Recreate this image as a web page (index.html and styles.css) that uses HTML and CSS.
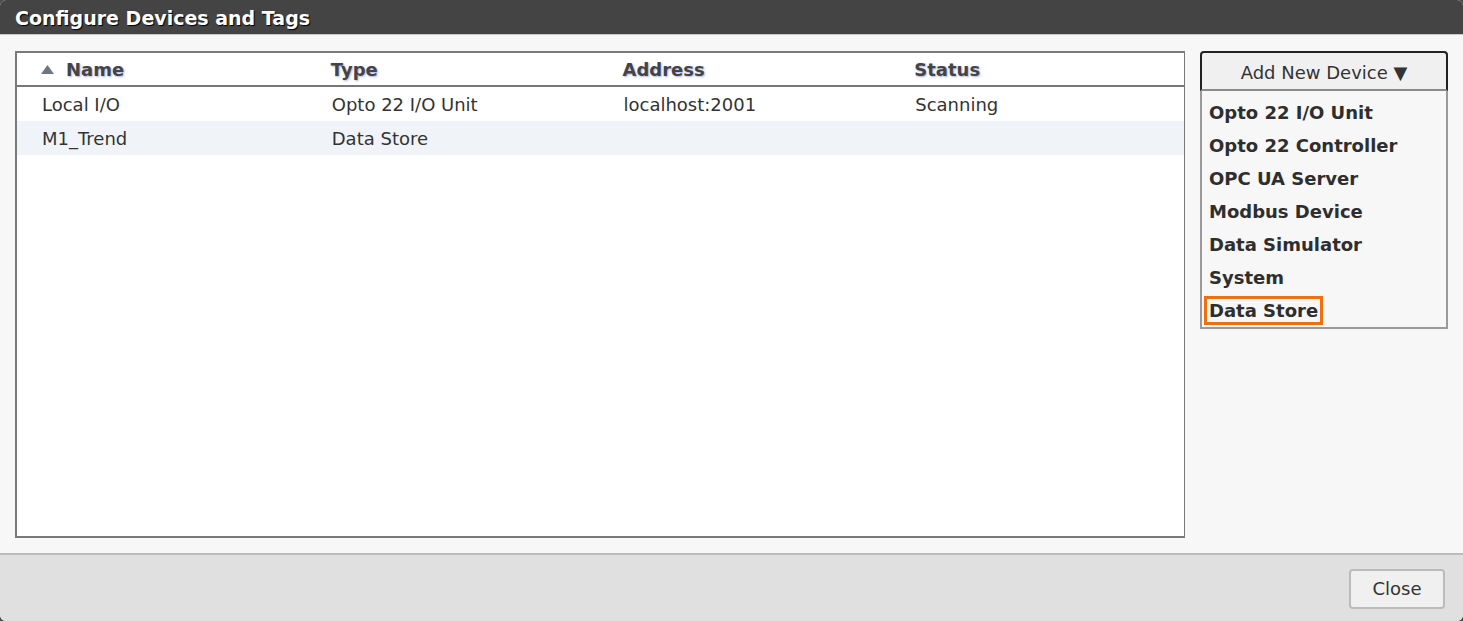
FILE: index.html
```html
<!DOCTYPE html>
<html>
<head>
<meta charset="utf-8">
<link rel="stylesheet" href="styles.css">
</head>
<body>
<div class="dialog">
  <div class="titlebar">Configure Devices and Tags</div>
  <div class="content">
    <div class="grid">
      <table class="devices">
        <thead>
          <tr>
            <th class="first"><svg class="sort" width="13" height="9" viewBox="0 0 13 9"><polygon points="6.5,0 13,9 0,9" fill="#6f7680"/></svg>Name</th>
            <th>Type</th>
            <th>Address</th>
            <th>Status</th>
          </tr>
        </thead>
        <tbody>
          <tr><td class="first">Local I/O</td><td>Opto 22 I/O Unit</td><td>localhost:2001</td><td>Scanning</td></tr>
          <tr class="alt"><td class="first">M1_Trend</td><td>Data Store</td><td></td><td></td></tr>
        </tbody>
      </table>
    </div>
    <div class="side">
      <div class="addbtn">Add New Device &#9660;</div>
      <ul class="menu">
        <li>Opto 22 I/O Unit</li>
        <li>Opto 22 Controller</li>
        <li>OPC UA Server</li>
        <li>Modbus Device</li>
        <li>Data Simulator</li>
        <li>System</li>
        <li><span class="focus">Data Store</span></li>
      </ul>
    </div>
  </div>
  <div class="footer">
    <button class="close">Close</button>
  </div>
</div>
</body>
</html>
```
FILE: styles.css
```css
html, body {
  margin: 0;
  padding: 0;
  background: #4a4a4a;
}
body {
  font-family: "DejaVu Sans", sans-serif;
  color: #333;
}
.dialog {
  width: 1463px;
  height: 621px;
  display: flex;
  flex-direction: column;
  border-radius: 6px;
  overflow: hidden;
  background: #f7f7f7;
}
.titlebar {
  height: 35px;
  box-sizing: border-box;
  background: #444;
  color: #fff;
  font-weight: bold;
  font-size: 19px;
  padding: 7px 0 0 15px;
  text-shadow: 1px 1px 1px #000;
  border-bottom: 1px solid #c8c8c8;
}
.content {
  flex: 1;
  display: flex;
  padding: 16px 15px 0 15px;
  gap: 15px;
  border-bottom: 2px solid #bcbcbc;
}
.grid {
  width: 1170px;
  height: 487px;
  box-sizing: border-box;
  border: 2px solid #7a7a7a;
  border-right-width: 1px;
  border-bottom-width: 2px;
  background: #fff;
}
.devices {
  width: 100%;
  border-collapse: collapse;
  table-layout: fixed;
  font-size: 18px;
}
.devices th {
  text-align: left;
  font-weight: bold;
  color: #444;
  height: 32px;
  padding: 0 0 0 22px;
  text-shadow: 1px 1px 2px #a9b4e6;
  border-bottom: 2px solid #777;
  vertical-align: middle;
}
.devices th.first {
  padding-left: 24px;
}
.sort {
  margin-right: 12px;
  vertical-align: 2px;
}
.devices td {
  height: 34px;
  padding: 0 0 0 23px;
  color: #333;
  vertical-align: middle;
}
.devices td.first {
  padding-left: 25px;
}
.devices tr.alt td {
  background: #f0f4f9;
}
.side {
  width: 248px;
}
.addbtn {
  height: 40px;
  box-sizing: border-box;
  border: 2px solid #222;
  border-bottom: 2px solid #8a8a8a;
  border-radius: 4px 4px 0 0;
  background: #f0f0f0;
  text-align: center;
  font-size: 18px;
  line-height: 38px;
  padding-top: 1px;
  color: #333;
}
.menu {
  list-style: none;
  margin: 0;
  padding: 4px 0 0 0;
  height: 238px;
  box-sizing: border-box;
  border: 2px solid #9a9a9a;
  border-top: none;
  background: #f7f7f7;
}
.menu li {
  height: 33px;
  line-height: 35px;
  font-weight: bold;
  font-size: 18px;
  padding-left: 7px;
  color: #2e2e2e;
}
.focus {
  display: inline-block;
  line-height: 23px;
  border: 3px solid #f07010;
  margin-left: -5px;
  padding: 0 2px 0 2px;
}
.footer {
  height: 66px;
  background: #e0e0e0;
  display: flex;
  justify-content: flex-end;
  align-items: flex-start;
  padding: 14px 18px 0 0;
  box-sizing: border-box;
}
.close {
  width: 96px;
  height: 40px;
  border: 2px solid #bbb;
  border-radius: 4px;
  background: #f0f0f0;
  font-family: inherit;
  font-size: 18px;
  padding-bottom: 2px;
  color: #333;
}
```
